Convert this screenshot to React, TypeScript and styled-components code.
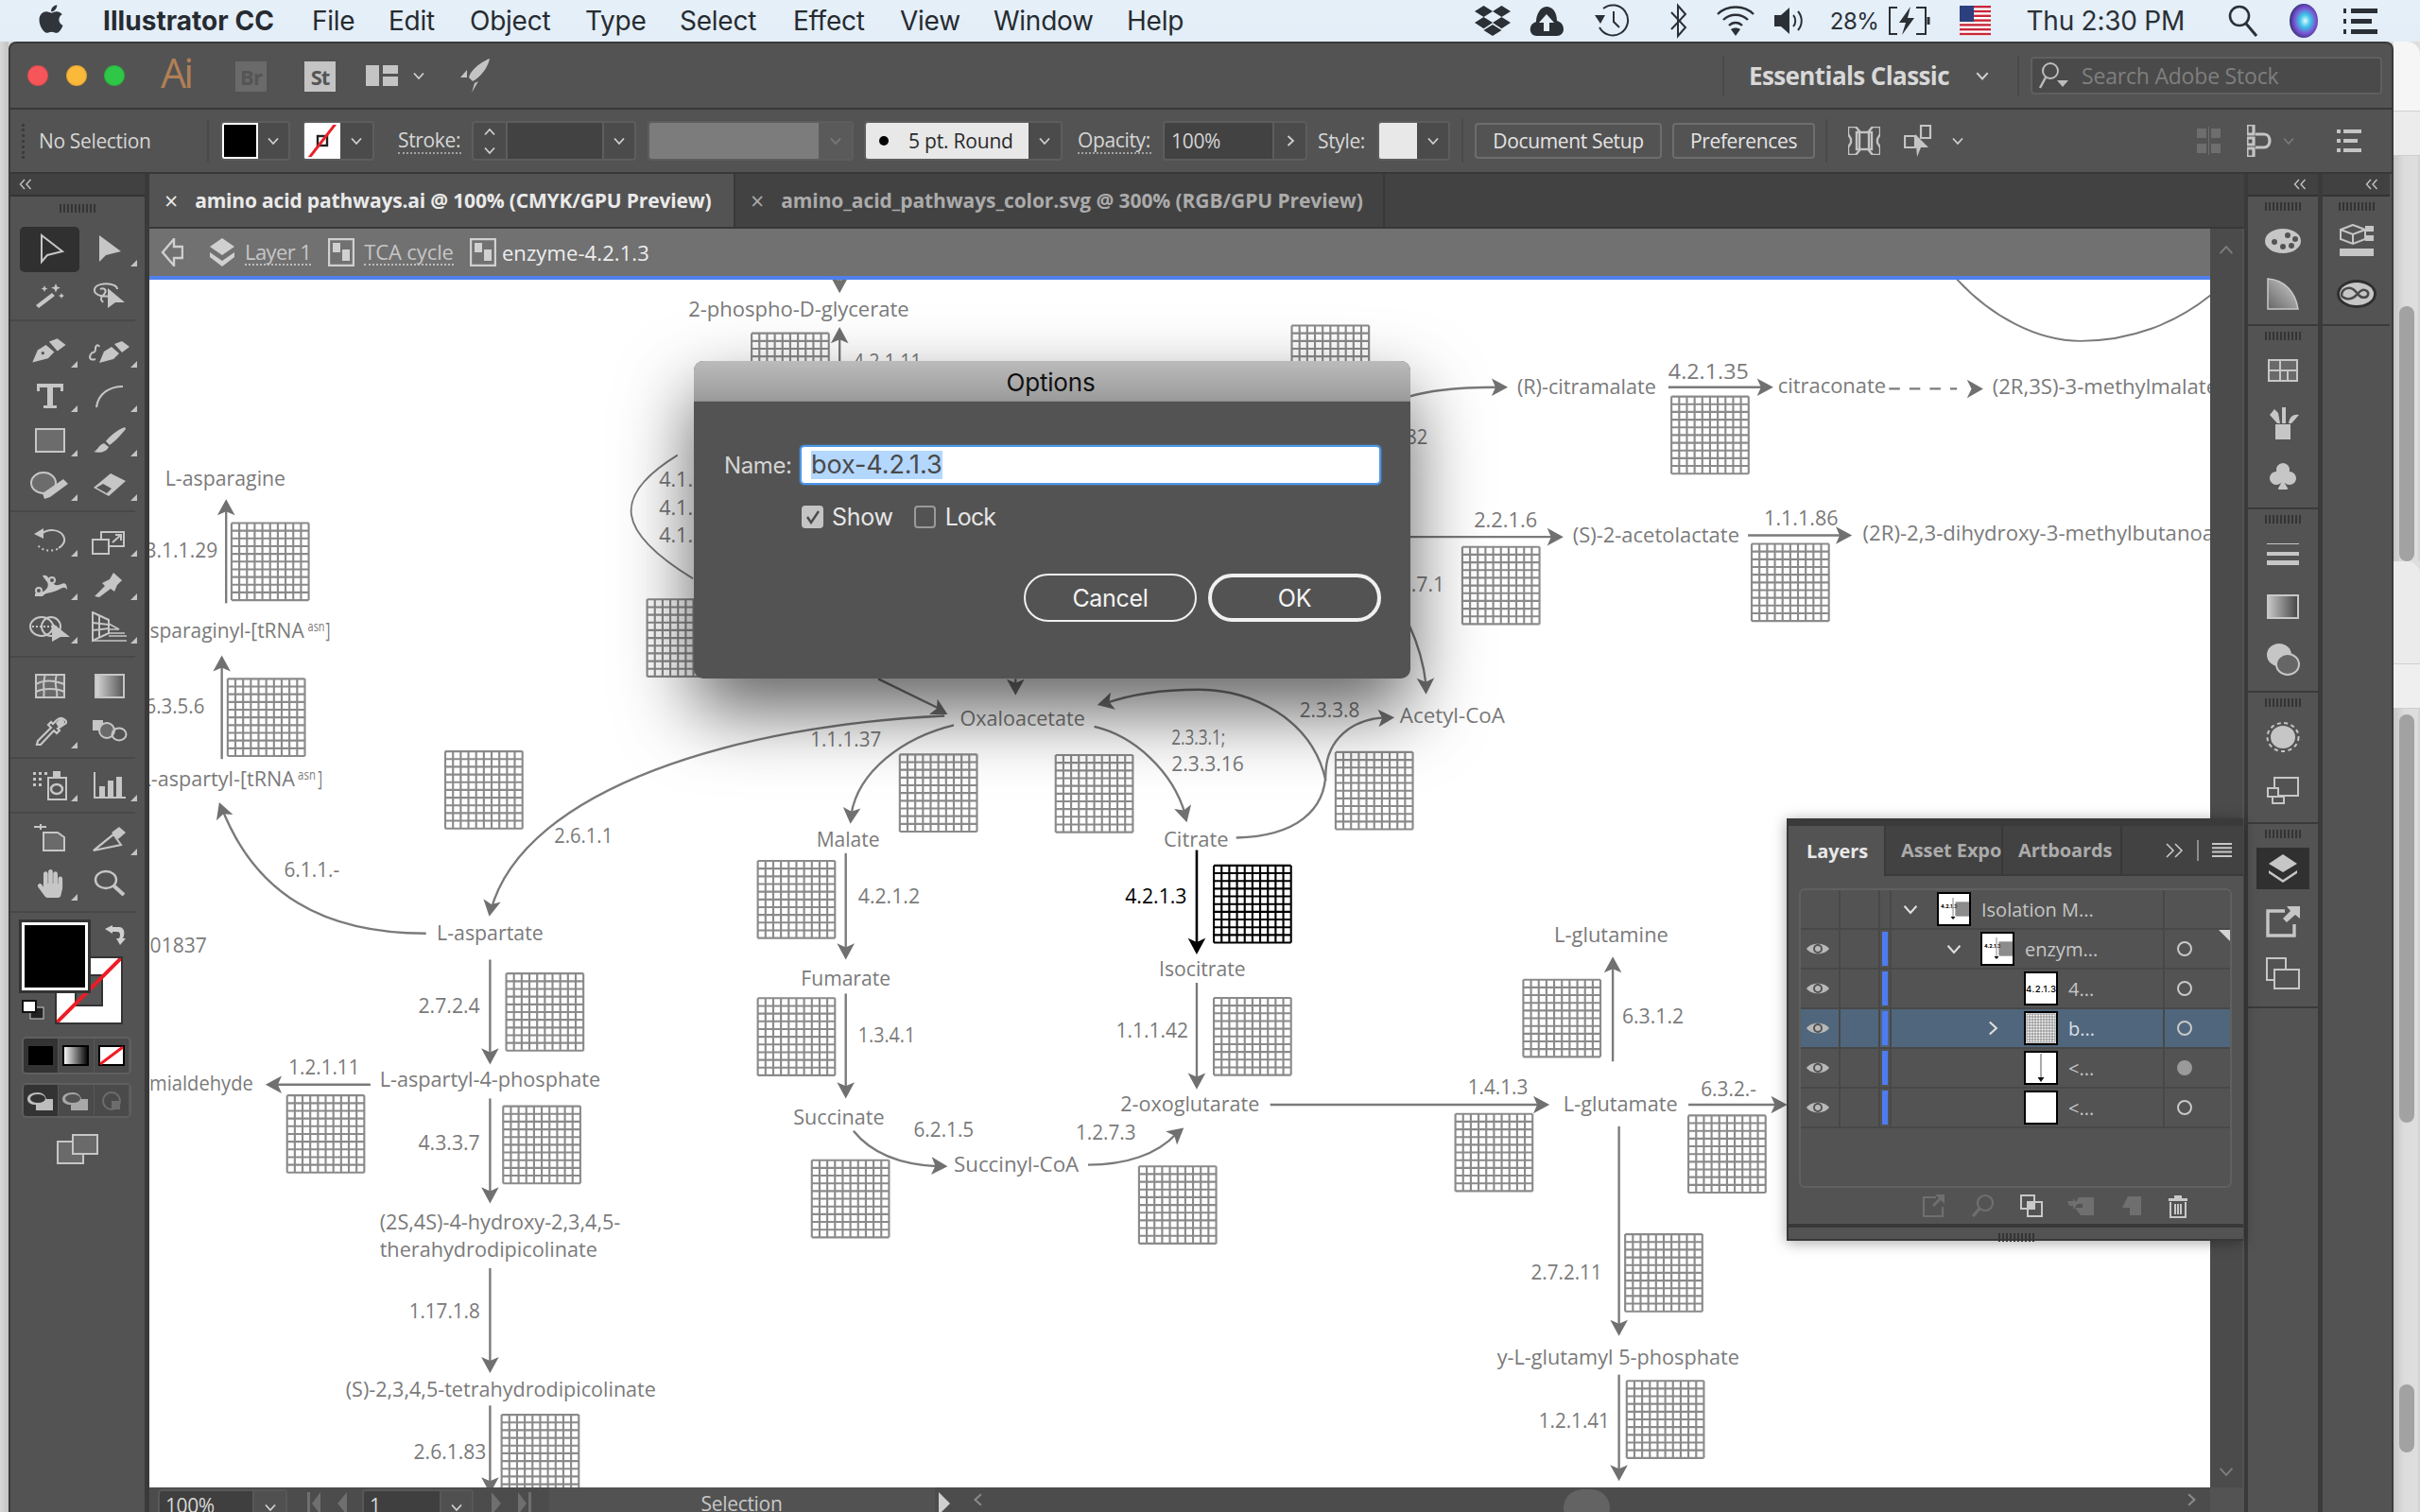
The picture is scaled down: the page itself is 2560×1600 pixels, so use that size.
import React from "react";
import styled, { createGlobalStyle } from "styled-components";
import { FaApple, FaDropbox, FaHandPaper } from "react-icons/fa";
import { BsSuitClubFill } from "react-icons/bs";

const Global = createGlobalStyle`
  html, body { margin: 0; padding: 0; width: 2560px; height: 1600px; overflow: hidden; background: #dcdcdc; }
  * { box-sizing: border-box; }
  body { font-family: "Open Sans", "Noto Sans", sans-serif; }
`;

const UI = `"Open Sans", "Noto Sans", sans-serif`;

const Root = styled.div`position: relative; width: 2560px; height: 1600px; overflow: hidden; display: flex; flex-direction: column;`;

/* ---------- mac menu bar ---------- */
const MenuBar = styled.div`
  height: 44px; flex: none; display: flex; align-items: center; background: linear-gradient(#e6f0f9, #e2edf7);
  color: #262b30; font-family: Inter, sans-serif; font-size: 28px; padding-left: 37px; position: relative;
`;
const AppleMark = styled.span`display: flex; color: #30353b; margin-right: 38px; margin-top: -4px;`;
const MenuItem = styled.span<{ $w: number; $b?: boolean }>`
  width: ${p => p.$w}px; flex: none; white-space: nowrap; font-weight: ${p => (p.$b ? 700 : 400)}; letter-spacing: ${p => (p.$b ? "0.05px" : "-0.25px")};
`;
const MenuRight = styled.div`
  margin-left: auto; display: flex; align-items: center; height: 44px; padding-right: 45px; color: #2b3036;
`;
const Tray = styled.span<{ $ml: number }>`display: flex; align-items: center; margin-left: ${p => p.$ml}px; white-space: nowrap;`;
const TrayPct = styled.span`font-size: 24px; letter-spacing: -0.4px;`;
const TrayClock = styled.span`font-size: 28px; letter-spacing: -0.25px;`;

/* ---------- desk ---------- */
const Desk = styled.div`flex: 1; display: flex; min-height: 0;`;
const LeftRail = styled.div`width: 9px; flex: none; background: linear-gradient(90deg, #d8d8d8, #c4c4c4);`;
const RightRail = styled.div`width: 28px; flex: none; display: flex; flex-direction: column; background: #dedede;`;
const RailTop = styled.div<{ $h: number; $c: string; $round?: boolean }>`
  height: ${p => p.$h}px; background: ${p => p.$c}; flex: none; border-top-right-radius: ${p => (p.$round ? 14 : 0)}px;
  border-bottom: 1px solid #cfcfcf;
`;
const RailTrack = styled.div<{ $h: number; $pt: number }>`
  height: ${p => p.$h}px; flex: none; padding: ${p => p.$pt}px 6px 0; background: linear-gradient(90deg, #c6c6c6, #dcdcdc 40%, #dedede 90%, #cfcfcf);
`;
const RailThumb = styled.div<{ $h: number }>`height: ${p => p.$h}px; border-radius: 8px; background: #a2a2a2;`;

/* ---------- window ---------- */
const Win = styled.div`
  width: 2523px; height: 1556px; flex: none; display: flex; flex-direction: column; background: #535353;
  border: 2px solid #3a3a3a; border-bottom: none; border-radius: 8px 8px 0 0; overflow: hidden; color: #c9c9c9; font-family: ${UI};
`;
const TitleBar = styled.div`height: 70px; flex: none; display: flex; align-items: center; border-bottom: 2px solid #383838; position: relative; padding-left: 18px; background: #535353;`;
const Light = styled.span<{ $c: string; $ml: number }>`
  width: 22px; height: 22px; border-radius: 50%; background: ${p => p.$c}; margin-left: ${p => p.$ml}px; flex: none; box-shadow: inset 0 0 0 1px rgba(0,0,0,.12);
`;
const AiMark = styled.span`font-family: "Open Sans", sans-serif; font-size: 43px; color: #b17f57; margin-left: 38px; width: 34px; line-height: 1; font-weight: 400; letter-spacing: -3px; margin-top: -8px; white-space: nowrap;`;
const AppBadge = styled.span<{ $on?: boolean; $ml: number }>`
  width: 33px; height: 32px; margin-left: ${p => p.$ml}px; display: flex; align-items: center; justify-content: center; flex: none; font-weight: 700; font-size: 22px; letter-spacing: -1px; margin-top: 2px;
  background: ${p => (p.$on ? "#c4c4c4" : "#6a6a6a")}; color: #555;
`;
const Spaced = styled.span<{ $ml: number }>`display: flex; align-items: center; margin-left: ${p => p.$ml}px; flex: none;`;
const VSep = styled.span<{ $ml: number; $h?: number }>`width: 2px; height: ${p => p.$h ?? 42}px; background: #494949; margin-left: ${p => p.$ml}px; flex: none;`;
const Workspace = styled.span`font-weight: 700; font-size: 26px; color: #d8d8d8; margin-left: 26px; width: 218px; white-space: nowrap; letter-spacing: -0.6px;`;
const StockField = styled.div`
  width: 372px; height: 40px; margin-left: 12px; border: 2px solid #5f5f5f; border-radius: 4px; background: #4a4a4a; display: flex; align-items: center; padding-left: 6px;
  color: #7f7f7f; font-size: 23px; flex: none; letter-spacing: -0.2px; gap: 10px;
`;

const ControlBar = styled.div`height: 68px; flex: none; display: flex; align-items: center; border-bottom: 2px solid #383838; background: #535353;`;
const GripV = styled.span`width: 3px; height: 37px; margin-left: 12px; border-left: 3px dotted #3c3c3c; flex: none;`;
const CtlText = styled.span<{ $ml: number; $w?: number; $dotted?: boolean; $c?: string }>`
  margin-left: ${p => p.$ml}px; font-size: 21px; white-space: nowrap; flex: none; width: ${p => (p.$w ? p.$w + "px" : "auto")}; letter-spacing: -0.35px;
  color: ${p => p.$c ?? "#d6d6d6"}; ${p => p.$dotted ? "border-bottom: 2px dotted #a2a2a2; line-height: 26px;" : ""}
`;
const Seg = styled.div<{ $ml: number; $w: number }>`
  margin-left: ${p => p.$ml}px; width: ${p => p.$w}px; height: 42px; flex: none; display: flex; border: 2px solid #5d5d5d; border-radius: 4px; background: #4b4b4b; overflow: hidden;
`;
const DD = styled.span<{ $dim?: boolean }>`
  flex: 1; display: flex; align-items: center; justify-content: center; color: ${p => (p.$dim ? "#7a7a7a" : "#cfcfcf")}; background: ${p => (p.$dim ? "#5a5a5a" : "transparent")};
`;
const Swatch = styled.span<{ $w: number; $c: string; $bd?: string }>`
  width: ${p => p.$w}px; flex: none; background: ${p => p.$c}; border: 2px solid ${p => p.$bd ?? "transparent"}; position: relative; display: flex; align-items: center; overflow: hidden;
`;
const BrushText = styled.span`font-size: 21px; color: #2a2a2a; letter-spacing: -0.2px; white-space: nowrap;`;
const BrushDot = styled.span`width: 10px; height: 10px; border-radius: 50%; background: #000; margin: 0 21px 0 12px;`;
const Stepper = styled.span`width: 36px; flex: none; display: flex; flex-direction: column; align-items: center; justify-content: space-around; border-right: 2px solid #5d5d5d; color: #cfcfcf;`;
const FieldCell = styled.span<{ $w: number }>`
  width: ${p => p.$w}px; flex: none; background: #424242; border-right: 2px solid #5d5d5d; font-size: 21px; color: #d4d4d4; padding-left: 7px; display: flex; align-items: center; letter-spacing: -0.3px;
`;
const CtlButton = styled.span<{ $ml: number; $w: number }>`
  margin-left: ${p => p.$ml}px; width: ${p => p.$w}px; height: 38px; flex: none; display: flex; align-items: center; justify-content: center;
  border: 2px solid #6d6d6d; border-radius: 4px; color: #e4e4e4; font-size: 21px; letter-spacing: -0.35px; white-space: nowrap;
`;

/* ---------- main ---------- */
const MainRow = styled.div`flex: 1; display: flex; min-height: 0;`;
const ToolCol = styled.div`width: 142px; flex: none; display: flex; flex-direction: column; background: #535353;`;
const CollapseHead = styled.div`
  height: 24px; flex: none; background: #414141; border-bottom: 2px solid #343434; display: flex; align-items: center; color: #bdbdbd; padding: 0 8px;
`;
const GripH = styled.div<{ $top: number }>`
  width: 38px; height: 9px; margin: ${p => p.$top}px auto 0; flex: none;
  background: repeating-linear-gradient(90deg, #343434 0 2px, transparent 2px 4px);
`;
const ToolGroup = styled.div<{ $pt: number; $pb: number; $row: number }>`
  display: grid; grid-template-columns: 63px 63px; grid-auto-rows: ${p => p.$row}px; padding: ${p => p.$pt}px 0 ${p => p.$pb}px 10px; margin: 0 10px 0 0;
  border-bottom: 2px solid #484848; flex: none;
`;
const Tool = styled.span<{ $on?: boolean; $corner?: boolean }>`
  position: relative; display: flex; align-items: center; justify-content: center; color: #c6c6c6; border-radius: 5px;
  ${p => (p.$on ? "background: #303030;" : "")}
  ${p => p.$corner ? `&::after { content: ""; position: absolute; right: 2px; bottom: 6px; border-style: solid; border-width: 0 0 7px 7px; border-color: transparent transparent #c4c4c4 transparent; }` : ""}
`;
const ColorArea = styled.div`position: relative; height: 124px; flex: none;`;
const BigFill = styled.div`position: absolute; left: 12px; top: 10px; width: 70px; height: 72px; background: #000; border: 3px solid #fff; outline: 3px solid #333;`;
const BigStroke = styled.div`position: absolute; left: 47px; top: 46px; width: 72px; height: 72px; background: #fff; border: 2px solid #333; overflow: hidden; display: flex;`;
const HoverIcon = styled.span<{ $l: number; $t: number }>`position: absolute; left: ${p => p.$l}px; top: ${p => p.$t}px; display: flex; color: #cfcfcf;`;
const ModeRow = styled.div<{ $mt: number; $h: number }>`
  margin: ${p => p.$mt}px 14px 0 12px; height: ${p => p.$h}px; flex: none; display: grid; grid-template-columns: repeat(3, 1fr); background: #4a4a4a; border: 2px solid #5f5f5f; border-radius: 5px; overflow: hidden;
`;
const ModeCell = styled.span<{ $on?: boolean; $dim?: boolean }>`display: flex; align-items: center; justify-content: center; background: ${p => (p.$on ? "#333" : "transparent")}; border-right: 1px solid #585858; color: ${p => (p.$dim ? "#6d6d6d" : "#c6c6c6")};`;
const ScreenBtn = styled.div`margin-top: 17px; display: flex; justify-content: center; color: #c6c6c6;`;
const Gutter = styled.div`width: 5px; flex: none; background: #3a3a3a;`;

const Center = styled.div`width: 2216px; flex: none; display: flex; flex-direction: column; min-height: 0;`;
const TabRow = styled.div`height: 58px; flex: none; display: flex; background: #424242; border-bottom: 2px solid #383838;`;
const DocTab = styled.div<{ $w: number; $on?: boolean }>`
  width: ${p => p.$w}px; flex: none; display: flex; align-items: center; padding-left: 16px; gap: 18px; border-right: 2px solid #383838; white-space: nowrap;
  background: ${p => (p.$on ? "#535353" : "#424242")}; color: ${p => (p.$on ? "#eaeaea" : "#ababab")}; font-size: 21px; font-weight: 700; letter-spacing: ${p => (p.$on ? "-0.17px" : "-0.09px")};
`;
const TabX = styled.span`font-weight: 400; font-size: 25px; line-height: 1;`;
const DocWrap = styled.div`flex: 1; display: flex; min-height: 0;`;
const DocCol = styled.div`width: 2180px; flex: none; display: flex; flex-direction: column; min-height: 0;`;
const Crumbs = styled.div`height: 50px; flex: none; background: #717171; display: flex; align-items: center; color: #cfcfcf; font-size: 22px;`;
const Crumb = styled.span<{ $ml: number; $on?: boolean; $ls: number }>`
  margin-left: ${p => p.$ml}px; letter-spacing: ${p => p.$ls}px; white-space: nowrap; color: ${p => (p.$on ? "#eeeeee" : "#c6c6c6")}; font-weight: ${p => (p.$on ? 500 : 400)};
  ${p => (p.$on ? "" : "border-bottom: 2px dotted #bdbdbd; line-height: 25px;")}
`;
const BlueLine = styled.div`height: 4px; flex: none; background: #4f80ec;`;
const CanvasBox = styled.div`flex: 1; background: #fff; min-height: 0; overflow: hidden; display: flex;`;
const Status = styled.div`height: 26px; flex: none; background: #4c4c4c; display: flex; align-items: flex-start; font-size: 21px; color: #cfcfcf; overflow: hidden;`;
const StField = styled.span<{ $ml: number; $w: number }>`
  margin-left: ${p => p.$ml}px; width: ${p => p.$w}px; height: 30px; margin-top: 2px; flex: none; display: flex; border: 2px solid #585858; border-radius: 4px; overflow: hidden; background: #3f3f3f;
`;
const StText = styled.span<{ $w: number }>`width: ${p => p.$w}px; flex: none; padding-left: 6px; line-height: 31px; white-space: nowrap; letter-spacing: -0.4px; color: #d8d8d8;`;
const StDD = styled.span`flex: 1; display: flex; justify-content: center; align-items: center; border-left: 2px solid #585858; background: #505050; padding-top: 8px; color: #d0d0d0;`;
const StIcon = styled.span<{ $ml: number; $end?: boolean }>`margin-left: ${p => (p.$end ? "auto" : p.$ml + "px")}; margin-right: ${p => (p.$end ? 12 : 0)}px; flex: none; display: flex; margin-top: 5px;`;
const StSel = styled.span`margin-left: 19px; width: 408px; height: 26px; flex: none; background: #525252; text-align: center; line-height: 34px; letter-spacing: -0.3px; color: #c8c8c8; padding-right: 1px;`;
const Knob = styled.span`margin-left: 611px; width: 49px; height: 40px; border-radius: 20px; background: #636363; flex: none; margin-top: 2px;`;

const VScroll = styled.div`width: 34px; flex: none; display: flex; flex-direction: column; background: #4b4b4b;`;
const VTrack = styled.div`flex: 1; display: flex; flex-direction: column; align-items: center; justify-content: space-between; padding: 14px 0 8px; color: #7f7f7f;`;
const VCorner = styled.div`height: 26px; flex: none; background: #535353;`;

const Dock = styled.div`width: 154px; flex: none; display: flex; border-left: 4px solid #3a3a3a;`;
const DockCol = styled.div<{ $w: number }>`width: ${p => p.$w}px; flex: none; display: flex; flex-direction: column; background: #535353;`;
const DockHead = styled.div`height: 24px; flex: none; background: #414141; border-bottom: 2px solid #343434; display: flex; align-items: center; justify-content: flex-end; color: #bdbdbd; padding: 0 11px;`;
const DockGroup = styled.div<{ $pb: number }>`
  flex: none; display: flex; flex-direction: column; align-items: center; padding-bottom: ${p => p.$pb}px; border-bottom: 2px solid #3a3a3a;
`;
const DockGrip = styled.div`width: 38px; height: 9px; margin: 6px 0 4px; background: repeating-linear-gradient(90deg, #343434 0 2px, transparent 2px 4px); flex: none;`;
const DockBtn = styled.span<{ $on?: boolean; $h?: number }>`
  width: 56px; height: ${p => p.$h ?? 56}px; display: flex; align-items: center; justify-content: center; color: #c6c6c6; border-radius: 5px; flex: none;
  ${p => (p.$on ? "background: linear-gradient(#303030,#303030) center/56px 44px no-repeat;" : "")}
`;
const DockGap = styled.div`width: 5px; flex: none; background: #3a3a3a;`;

/* ---------- layers panel ---------- */
const LayersPanel = styled.div`
  position: absolute; left: 1890px; top: 866px; width: 483px; height: 447px; background: #535353; border: 2px solid #383838; border-top: 8px solid #3a3a3a; display: flex; flex-direction: column;
  box-shadow: 0 2px 14px rgba(0,0,0,.35); font-family: ${UI}; z-index: 2; border-right: 0;
`;
const PTabs = styled.div`height: 53px; flex: none; display: flex; background: #424242; align-items: stretch; border-bottom: 2px solid #3a3a3a; position: relative;`;
const PTab = styled.span<{ $w: number; $on?: boolean }>`
  width: ${p => p.$w}px; flex: none; display: flex; align-items: center; overflow: hidden; white-space: nowrap; padding-left: ${p => (p.$on ? 19 : 16)}px; font-size: 20px; font-weight: 700; letter-spacing: -0.1px;
  background: ${p => (p.$on ? "#535353" : "#424242")}; color: ${p => (p.$on ? "#e8e8e8" : "#ababab")}; border-right: 2px solid #383838;
  ${p => (p.$on ? "margin-bottom: -2px; border-right-color: #3a3a3a;" : "")}
`;
const PTabTools = styled.span`margin-left: auto; display: flex; align-items: center; gap: 14px; padding-right: 12px; color: #c8c8c8;`;
const PTabDiv = styled.span`width: 2px; height: 22px; background: #8d8d8d;`;
const PFrame = styled.div`
  margin: 13px 12px 0 11px; height: 317px; border: 2px solid #606060; border-radius: 6px; flex: none; overflow: hidden; position: relative;
`;
const LRow = styled.div<{ $sel?: boolean }>`
  height: 42px; display: grid; grid-template-columns: 42px 42px 12px 289px 1fr; border-bottom: 2px solid #484848;
  background: ${p => (p.$sel ? "#50667c" : "transparent")}; color: ${p => (p.$sel ? "#d8dfe6" : "#c6c6c6")};
`;
const LCell = styled.span<{ $bar?: boolean; $line?: boolean; $eye?: boolean }>`
  display: flex; align-items: center; justify-content: center; position: relative; padding-right: ${p => (p.$eye ? 5 : 0)}px;
  ${p => (p.$line === false ? "" : "border-right: 2px solid #484848;")}
  ${p => p.$bar ? `&::before { content: ""; position: absolute; left: 2px; top: 2px; bottom: 2px; width: 6px; background: #4e7cf0; }` : ""}
`;
const LMain = styled.span<{ $level: number }>`
  display: flex; align-items: center; border-right: 2px solid #484848; padding-left: ${p => 48 + 46 * p.$level}px; position: relative; font-size: 20px; font-weight: 500; white-space: nowrap;
`;
const LChevron = styled.span<{ $in: boolean }>`position: absolute; display: flex; transform: translateX(${p => (p.$in ? -42 : -37)}px);`;
const Thumb = styled.span`width: 36px; height: 36px; background: #fff; border: 2px solid #000; flex: none; margin-right: 11px; display: flex; overflow: hidden;`;
const TargetRing = styled.span<{ $full?: boolean }>`
  width: 16px; height: 16px; border-radius: 50%; border: 2px solid #c8c8c8; margin-left: -28px; ${p => (p.$full ? "background: #9a9a9a; border-color:#9a9a9a;" : "")}
`;
const CornerFlag = styled.span`position: absolute; right: 0; top: 42px; border-style: solid; border-width: 0 12px 12px 0; border-color: transparent #d4d4d4 transparent transparent;`;
const PFoot = styled.div`height: 38px; flex: none; display: flex; align-items: center; padding-left: 141px; color: #6f6f6f; gap: 26px;`;
const PFootOn = styled.span`color: #c8c8c8; display: flex;`;
const PStrip = styled.div`flex: 1; border-top: 4px solid #383838; display: flex; justify-content: center; align-items: center;`;

/* ---------- dialog ---------- */
const Dialog = styled.div`
  position: absolute; left: 734px; top: 382px; width: 758px; height: 336px; border-radius: 10px; background: #535353; z-index: 3;
  box-shadow: 0 34px 78px rgba(0,0,0,.62); display: flex; flex-direction: column; font-family: ${UI}; overflow: hidden;
`;
const DlgTitle = styled.div`
  height: 43px; flex: none; background: linear-gradient(#bcbbbc, #9b9b9b); text-align: center; color: #111; font-family: Inter, sans-serif; font-size: 26px; line-height: 45px; letter-spacing: -0.2px; border-bottom: 1px solid #8c8c8c; padding-right: 3px;
`;
const DlgBody = styled.div`flex: 1; padding: 46px 31px 0 32px; display: flex; flex-direction: column; font-family: Inter, sans-serif;`;
const NameRow = styled.div`display: flex; align-items: center; gap: 8px;`;
const NameLabel = styled.label`font-size: 24px; color: #d4d4d4; width: 72px; letter-spacing: -0.4px;`;
const NameField = styled.div`
  width: 615px; height: 42px; background: #fff; border: 2px solid #4e97e8; border-radius: 5px; box-shadow: 0 0 2px #4e97e8; padding-left: 10px; display: flex; align-items: center; color: #4a4a4a; font-size: 27px; letter-spacing: -0.1px;
`;
const SelText = styled.span`background: #b4d7fe; line-height: 30px;`;
const ChkRow = styled.div`display: flex; align-items: center; margin: 19px 0 0 82px; font-size: 25px; color: #e6e6e6;`;
const Chk = styled.span<{ $on?: boolean; $ml: number }>`
  width: 23px; height: 24px; border-radius: 4px; margin-left: ${p => p.$ml}px; flex: none; display: flex; align-items: center; justify-content: center; color: #4a4a4a;
  ${p => (p.$on ? "background: #c4c4c4;" : "border: 2px solid #9a9a9a;")}
`;
const ChkText = styled.span<{ $ml: number; $ls: number }>`margin-left: ${p => p.$ml}px; letter-spacing: ${p => p.$ls}px;`;
const BtnRow = styled.div`display: flex; justify-content: flex-end; gap: 12px; margin-top: 45px;`;
const DlgBtn = styled.span<{ $def?: boolean }>`
  width: 183px; height: 51px; border-radius: 26px; border: ${p => (p.$def ? "4px" : "2px")} solid #f0f0f0; display: flex; align-items: center; justify-content: center; color: #f4f4f4; font-size: 25px; letter-spacing: -0.3px;
`;

/* ---------- icon helpers ---------- */
const Svg: React.FC<{ w: number; h: number; vb?: string; children: React.ReactNode }> = ({ w, h, vb, children }) => (
  <svg width={w} height={h} viewBox={vb ?? `0 0 ${w} ${h}`} fill="currentColor" style={{ display: "block", flex: "none" }}>{children}</svg>
);
const Chevron: React.FC<{ d?: "d" | "u" | "r" | "l"; s?: number; c?: string; sw?: number }> = ({ d = "d", s = 14, c = "currentColor", sw = 1.8 }) => {
  const r = { d: 0, u: 180, r: -90, l: 90 }[d];
  return <svg width={s} height={s} viewBox="0 0 14 14" style={{ transform: `rotate(${r}deg)`, display: "block", flex: "none" }}><path d="M2 4.5 L7 10 L12 4.5" fill="none" stroke={c} strokeWidth={sw} /></svg>;
};
const Dbl = () => <svg width="16" height="14" viewBox="0 0 16 14"><path d="M7 2 L2.5 7 L7 12 M13.5 2 L9 7 L13.5 12" fill="none" stroke="#c2c2c2" strokeWidth="1.4" /></svg>;
const ln = { fill: "none", stroke: "currentColor", strokeWidth: 2 } as const;

const SelTool = () => <Svg w={40} h={34}><path {...ln} d="M11 2 L11 30 L17 23 L33 19 Z" /></Svg>;
const DirTool = () => <Svg w={40} h={34}><path d="M9 2 L9 30 L16 23 L32 19 Z" /></Svg>;
const Wand = () => <Svg w={40} h={30}><path d="M5 26 L22 13 L25 16 L8 29 Z M26 3 l1.5 3.5 3.5 1 -3.5 1.5 -1.5 3.5 -1.5 -3.5 -3.5 -1.5 3.5 -1 Z M14 5 l1 2.5 2.5 1 -2.5 1 -1 2.5 -1 -2.5 -2.5 -1 2.5 -1 Z M32 13 l1 2 2 1 -2 1 -1 2 -1 -2 -2 -1 2 -1 Z" /></Svg>;
const LassoT = () => <Svg w={40} h={32}><path {...ln} d="M21 17 C10 19 3 15 4 10 C5 5 15 3 22 5 C26 6 28 8 28 10 M10 10 C14 8 17 11 15 14 C13 18 10 17 11 21 L13 24" /><path d="M18 30 L18 9 L36 24 L26 24 Z" /></Svg>;
const Pen = () => <Svg w={44} h={29} vb="0 0 40 26"><path d="M3 24 L8 12 L16 7 L24 14 L18 20 Z M19 4 L27 1 L35 7 L27 13 Z" /><circle cx="13" cy="15" r="1.5" fill="#535353" /></Svg>;
const Curv = () => <Svg w={46} h={28}><path {...ln} d="M8 22 C2 24 1 20 3 17 C5 13 8 17 8 11 C8 7 11 6 12 9" /><path d="M12 26 L17 14 L25 9 L33 16 L27 22 Z M28 6 L36 3 L44 9 L36 15 Z" /></Svg>;
const TypeT = () => <Svg w={34} h={30}><path d="M3 2 H31 V10 H28 V6 H20 V25 H24 V28 H10 V25 H14 V6 H6 V10 H3 Z" /></Svg>;
const Arc = () => <Svg w={32} h={26}><path {...ln} d="M2 25 C4 10 16 3 30 3" /></Svg>;
const Rect = () => <Svg w={34} h={28}><rect x="2" y="2" width="30" height="24" fill="#6c6c6c" stroke="currentColor" strokeWidth="2" /></Svg>;
const Brush = () => <Svg w={36} h={30}><path d="M34 1 C28 3 18 10 14 16 L18 20 C25 15 31 8 35 3 Z M12 18 L17 22 C15 27 7 29 1 27 C5 26 6 20 12 18 Z" /></Svg>;
const Shaper = () => <Svg w={44} h={30}><ellipse cx="15" cy="13" rx="13" ry="11" fill="#6c6c6c" stroke="currentColor" strokeWidth="2" /><path d="M14 24 L16 30 L22 28 L41 14 L36 9 Z" /></Svg>;
const Eraser = () => <Svg w={36} h={28}><path d="M1 17 L19 2 L35 10 L17 26 Z" fill="currentColor" /><path d="M4 17 L11 13 L20 18 L15 23 Z" fill="#535353" /></Svg>;
const Rotate = () => <Svg w={36} h={30}><path d="M9 8 C16 2 28 3 32 10 C35 16 32 20 27 23" fill="none" stroke="currentColor" strokeWidth="2" /><path d="M26 24 C18 27 10 26 5 20" fill="none" stroke="currentColor" strokeWidth="2" strokeDasharray="2 3" /><path d="M1 8 L11 2 L11 13 Z" /></Svg>;
const Scale = () => <Svg w={38} h={32}><path {...ln} d="M1 15 H18 V30 H1 Z M10 15 V7 H34 V22 H18" /><path {...ln} d="M22 18 L31 10 M25 10 H31 V16" /></Svg>;
const Warp = () => <Svg w={40} h={28}><path d="M4 24 C10 24 14 22 17 18 C20 12 14 10 12 5 C16 4 18 6 20 10 C24 16 28 16 32 14 C36 12 38 15 38 20 C35 16 33 18 29 20 C22 24 16 22 12 27 L4 27 Z" /><circle cx="8" cy="21" r="3" fill="#535353" stroke="currentColor" strokeWidth="2" /><circle cx="22" cy="10" r="3" fill="#535353" stroke="currentColor" strokeWidth="2" /></Svg>;
const PinT = () => <Svg w={34} h={28}><path d="M1 27 L12 16 L9 13 L17 9 L21 2 L30 10 L25 15 L22 22 L18 19 L6 28 Z" /></Svg>;
const Builder = () => <Svg w={46} h={30}><ellipse cx="14" cy="14" rx="12" ry="10" fill="none" stroke="currentColor" strokeWidth="2" /><ellipse cx="24" cy="14" rx="10" ry="10" fill="none" stroke="currentColor" strokeWidth="2" /><path d="M4 14 H30" stroke="currentColor" strokeDasharray="2 2" strokeWidth="2" /><path d="M25 30 L25 10 L44 25 L34 25 Z" /></Svg>;
const Persp = () => <Svg w={40} h={34}><path d="M2 1 L19 9 L19 23 L2 31 Z" fill="none" stroke="currentColor" strokeWidth="2" /><path d="M2 12 L19 14 M2 20 L19 18 M9 4 V28" stroke="currentColor" strokeWidth="2" /><path d="M19 13 L30 19 H19 M19 23 H36 M19 26 H38 M2 31 H38" stroke="currentColor" strokeWidth="1.6" fill="none" /></Svg>;
const Mesh = () => <Svg w={34} h={28}><rect x="2" y="2" width="30" height="24" fill="#6a6a6a" stroke="currentColor" strokeWidth="2" /><path {...ln} d="M2 12 C12 6 22 8 32 12 M2 20 C10 16 24 16 32 20 M12 2 C8 12 12 20 10 26 M24 2 C20 12 26 20 24 26" /></Svg>;
const Grad = () => <svg width="34" height="28" viewBox="0 0 34 28"><defs><linearGradient id="tg" x1="0" x2="1"><stop offset="0" stopColor="#d8d8d8" /><stop offset="1" stopColor="#555" /></linearGradient></defs><rect x="2" y="2" width="30" height="24" fill="url(#tg)" stroke="#c6c6c6" strokeWidth="2" /></svg>;
const Dropper = () => <Svg w={36} h={32}><path d="M34 4 C31 1 28 1 25 4 L21 8 L19 6 L16 9 L19 12 L5 26 L4 30 L8 30 L22 15 L25 18 L28 15 L26 13 L32 9 C35 8 36 6 34 4 Z" fill="none" stroke="currentColor" strokeWidth="2.2" /><path d="M24 7 L28 3 C31 1 35 5 32 9 L27 12 Z" /></Svg>;
const Blend = () => <Svg w={38} h={28}><rect x="1" y="2" width="11" height="11" /><circle cx="16" cy="13" r="8" fill="#6a6a6a" stroke="currentColor" strokeWidth="2" /><ellipse cx="29" cy="17" rx="7.5" ry="6.5" fill="none" stroke="currentColor" strokeWidth="2" /></Svg>;
const Sprayer = () => <Svg w={38} h={34}><path d="M1 3 h3 v3 h-3 Z M7 3 h3 v3 h-3 Z M13 3 h3 v3 h-3 Z M1 9 h3 v3 h-3 Z M7 9 h3 v3 h-3 Z M1 15 h3 v3 h-3 Z M7 15 h3 v3 h-3 Z" /><path {...ln} d="M17 9 H36 V32 H17 Z" /><path d="M22 2 H30 V8 H22 Z" /><ellipse cx="26" cy="21" rx="6" ry="5" fill="none" stroke="currentColor" strokeWidth="2.5" /></Svg>;
const Graph = () => <Svg w={38} h={30}><path d="M2 1 H4 V27 H36 V29 H2 Z M8 16 H14 V27 H8 Z M17 10 H23 V27 H17 Z M26 6 H32 V27 H26 Z" /></Svg>;
const Artboard = () => <Svg w={36} h={30}><path d="M1 3 H14 M8 0 V6" stroke="currentColor" strokeWidth="2" /><path d="M11 9 H26 L33 14 V28 H11 Z" fill="#6a6a6a" stroke="currentColor" strokeWidth="2" /></Svg>;
const Knife = () => <Svg w={36} h={30}><path {...ln} d="M1 28 L22 11" /><path d="M1 28 L30 22 L22 11 Z" fill="none" stroke="currentColor" strokeWidth="2" /><path d="M20 9 L28 3 L35 9 L27 16 Z" /></Svg>;
const Zoom = () => <Svg w={34} h={30}><ellipse cx="13" cy="11" rx="11" ry="9" fill="none" stroke="currentColor" strokeWidth="2.4" /><path d="M21 17 L32 27" stroke="currentColor" strokeWidth="4" /></Svg>;

/* ---------- canvas ---------- */
const GREY = "#7a7a7a";
type T = [string, number, number, number, string?];
const labels: T[] = [
  ["2-phospho-D-glycerate", 446, 589, 200.4], ["4.2.1.11", 553, 597, 234], ["(R)-citramalate", 983, 1073, 251], ["4.2.1.35", 1081, 1133, 241],
  ["citraconate", 1152, 1222, 250], ["(2R,3S)-3-methylmalate", 1291, 1437, 251], ["2.2.1.6", 955, 996, 337], ["(S)-2-acetolactate", 1019, 1127, 347],
  ["1.1.1.86", 1143, 1191, 336], ["(2R)-2,3-dihydroxy-3-methylbutanoate", 1207, 1447, 346], ["L-asparagine", 107, 185, 310], ["3.1.1.29", 94, 141, 357],
  ["L-asparaginyl-[tRNA", 79, 197, 409], ["]", 211, 214, 409], ["6.3.5.6", 94, 132.5, 458], ["L-aspartyl-[tRNA", 91, 191, 505], ["]", 206, 209, 505],
  ["C01837", 89, 134, 613], ["6.1.1.-", 184, 220, 564], ["2.6.1.1", 359, 397, 542], ["L-aspartate", 283, 352, 605], ["1.1.1.37", 525, 571, 479],
  ["Oxaloacetate", 622, 703, 466], ["2.3.3.1;", 759, 794, 478], ["2.3.3.16", 759, 806, 495], ["2.3.3.8", 842, 881, 460], ["Acetyl-CoA", 907, 975, 464],
  ["Malate", 529, 570, 544], ["Citrate", 754, 796, 544], ["4.2.1.3", 729, 769, 581, "#000"], ["4.2.1.2", 556, 596, 581], ["Fumarate", 519, 577, 634],
  ["Isocitrate", 751, 807, 628], ["1.3.4.1", 556, 593, 671], ["1.1.1.42", 723, 770, 668], ["Succinate", 514, 573, 724], ["2-oxoglutarate", 726, 816, 716],
  ["6.2.1.5", 592, 631, 732], ["1.2.7.3", 697, 736, 734], ["Succinyl-CoA", 618, 699, 755], ["L-aspartyl-4-phosphate", 246, 389, 700], ["2.7.2.4", 271, 311, 652],
  ["1.2.1.11", 187, 233, 692], ["semialdehyde", 84, 164, 702], ["4.3.3.7", 271, 311, 741], ["(2S,4S)-4-hydroxy-2,3,4,5-", 246, 402, 792],
  ["therahydrodipicolinate", 246, 387, 810], ["1.17.1.8", 265, 311, 850], ["(S)-2,3,4,5-tetrahydrodipicolinate", 224, 425, 901], ["2.6.1.83", 268, 315, 941],
  ["L-glutamine", 1007, 1081, 606], ["6.3.1.2", 1051, 1091, 659], ["1.4.1.3", 951, 990, 705], ["L-glutamate", 1013, 1087, 716], ["6.3.2.-", 1102, 1138, 706],
  ["2.7.2.11", 992, 1038, 825], ["y-L-glutamyl 5-phosphate", 970, 1127, 880], ["1.2.1.41", 997, 1043, 921],
  ["4.1.", 427, 449, 311], ["4.1.", 427, 449, 329], ["4.1.", 427, 449, 347], ["4.2.1.82", 880, 925, 283], ["2.2.7.1", 896, 936, 379],
];
const grids: [number, number, string?][] = [
  [487, 216], [837, 211], [1083, 257], [947.5, 354.5], [1135, 352.5], [150, 339], [147.5, 440], [419.3, 388.5], [288.5, 487], [583, 489], [684, 489.4], [865.4, 487.5],
  [786.5, 561, "#000"], [786.5, 646.8], [491, 558], [491, 647], [526, 752], [738, 756], [328, 631], [326, 717], [186, 710], [325, 917], [987, 635], [943, 722], [1094, 723], [1053, 800], [1054, 895],
];
const CELL = 5;
const gridPath = (x: number, y: number) => {
  let d = "";
  for (let i = 0; i <= 10; i++) d += `M${x + i * CELL} ${y}V${y + 50}M${x} ${y + i * CELL}H${x + 50}`;
  return d;
};
type Arw = [string, number, number, number, string?]; // path, tipx, tipy, angle(deg), color
const arrows: Arw[] = [
  ["M146.5 391V330", 146.5, 323.5, -90], ["M143.7 492V431", 143.7, 424.7, -90], ["M276 605C210 605 165 580 143 522", 142, 520, -110],
  ["M612 464C480 470 340 510 318 590", 317, 594, 100], ["M569 440L610 460", 614, 463, 28], ["M658 440V446", 658, 450.7, 90],
  ["M618 470C585 478 556 500 551.5 528", 551, 534, 95], ["M709 471C735 477 760 500 768 528", 769, 533, 75],
  ["M859 506C850 465 810 447 776 447C750 447 730 451 716 456", 711, 457, 165], ["M801 543C840 542 859 525 859 500C860 480 875 466 898 465", 903.5, 465, -3],
  ["M775.4 551V612", 775.4, 618.6, 90, "#000"], ["M775.4 637V700", 775.4, 706, 90], ["M548 553V616", 548, 622, 90], ["M548 644V706", 548, 712, 90],
  ["M553 733C565 748 585 755 608 756", 614, 756, 2], ["M705 755C730 755 750 748 762 735", 767, 731, -40], ["M823 716H998", 1004, 716, 0],
  ["M317.5 622V684", 317.5, 690, 90], ["M317.5 712V774", 317.5, 780, 90], ["M317.5 822V884", 317.5, 890, 90], ["M317.5 911V964", 317.5, 968, 90],
  ["M240 703H178", 172, 703, 180], ["M1045 688V626", 1045, 620, -90], ["M1049 730V860", 1049, 866, 90], ["M1049 891V954", 1049, 960, 90], ["M1094 716H1152", 1158, 716, 0],
  ["M913 257C930 252 950 251 970 251", 977, 251, 0], ["M1081 251H1143", 1149, 251, 0], ["M900 348H1007", 1013, 348, 0], ["M1132.6 347H1194", 1200, 347, 0],
  ["M913 405C920 420 923 435 924 444", 924, 450, 88], ["M544 170V184", 544, 190, 90], ["M544 260V218", 544, 212, -90],
];
const Diagram = () => (
  <svg width="2180" height="1278" viewBox="96.8 181.3 1335.2 782.8" style={{ display: "block" }}>
    {grids.map(([x, y, c], i) => <path key={i} d={gridPath(x, y)} fill="none" stroke={c ?? "#8a8a8a"} strokeWidth="1.3" />)}
    <g fill="none" stroke={GREY} strokeWidth="1.15">
      <path d="M1268 181C1290 205 1320 221 1348 221C1380 221 1410 210 1434 190" />
      <path d="M439 295C395 322 400 345 449 375" />
    </g>
    {arrows.map(([d, x, y, a, c], i) => (
      <g key={i}>
        <path d={d} fill="none" stroke={c ?? GREY} strokeWidth={c ? 1.6 : 1.45} />
        <path d="M0 0L-10.5 -5.7L-8 0L-10.5 5.7Z" fill={c ?? "#707070"} transform={`translate(${x} ${y}) rotate(${a})`} />
      </g>
    ))}
    <path d="M1224 252H1268" fill="none" stroke={GREY} strokeWidth="1.45" strokeDasharray="7 6.2" />
    <path d="M0 0L-10.5 -6L-7.6 0L-10.5 6Z" fill="#707070" transform="translate(1285 252)" />
    <g fontFamily={`"Open Sans", sans-serif`} fontSize="13.4" fill={GREY}>
      {labels.map(([t, a, b, y, c], i) => (
        <text key={i} x={a} y={y + 4.6} textLength={b - a} lengthAdjust="spacingAndGlyphs" fill={c}>{t}</text>
      ))}
      <text x="199.4" y="409.2" fontSize="8.4" textLength="11" lengthAdjust="spacingAndGlyphs">asn</text>
      <text x="193" y="505.2" fontSize="8.4" textLength="11.5" lengthAdjust="spacingAndGlyphs">asn</text>
    </g>
  </svg>
);

const MiniGrid = () => (
  <svg width="32" height="32" viewBox="0 0 32 32"><path d={Array.from({ length: 11 }, (_, i) => `M${1 + i * 3} 1V31M1 ${1 + i * 3}H31`).join("")} stroke="#777" strokeWidth=".8" fill="none" /></svg>
);
const MiniAll = () => (
  <svg width="32" height="32" viewBox="0 0 32 32">
    <text x="2" y="15" fontSize="5.4" fontWeight="700" fontFamily="Inter, sans-serif" fill="#000">4.2.1.3</text>
    <path d="M15 4V25" stroke="#888" strokeWidth="1" /><path d="M12.5 24H17.5L15 27Z" fill="#000" />
    <path d={Array.from({ length: 8 }, (_, i) => `M${18 + i * 2} 9V23M18 ${9 + i * 2}H32`).join("")} stroke="#666" strokeWidth="1" fill="none" />
  </svg>
);
const MiniText = () => <svg width="32" height="32" viewBox="0 0 32 32"><text x="0" y="20" fontSize="9.6" textLength="32" fontFamily="Inter, sans-serif" fill="#000">4.2.1.3</text></svg>;
const MiniArrow = () => <svg width="32" height="32" viewBox="0 0 32 32"><path d="M16 1V26" stroke="#aaa" strokeWidth="2" /><path d="M12.5 26H19.5L16 31Z" fill="#111" /></svg>;
const Eye = () => <Svg w={26} h={16}><path d="M1 8C6 1 20 1 25 8C20 15 6 15 1 8Z" fill="#b8b8b8" /><circle cx="13" cy="8" r="5" fill="#535353" /><circle cx="13" cy="8" r="3" fill="#b8b8b8" /></Svg>;

const rows: { sel?: boolean; eye: boolean; level: number; chev?: "d" | "r"; thumb: React.ReactNode; name: string; full?: boolean; ring: boolean }[] = [
  { eye: false, level: 0, chev: "d", thumb: <MiniAll />, name: "Isolation M...", ring: false },
  { eye: true, level: 1, chev: "d", thumb: <MiniAll />, name: "enzym...", ring: true },
  { eye: true, level: 2, thumb: <MiniText />, name: "4...", ring: true },
  { eye: true, sel: true, level: 2, chev: "r", thumb: <MiniGrid />, name: "b...", ring: true },
  { eye: true, level: 2, thumb: <MiniArrow />, name: "<...", full: true, ring: true },
  { eye: true, level: 2, thumb: null, name: "<...", ring: true },
];

export default function App() {
  return (
    <Root>
      <Global />
      <MenuBar>
        <AppleMark><FaApple size={34} /></AppleMark>
        <MenuItem $b $w={221}>Illustrator CC</MenuItem>
        <MenuItem $w={81}>File</MenuItem>
        <MenuItem $w={86}>Edit</MenuItem>
        <MenuItem $w={122}>Object</MenuItem>
        <MenuItem $w={100}>Type</MenuItem>
        <MenuItem $w={120}>Select</MenuItem>
        <MenuItem $w={113}>Effect</MenuItem>
        <MenuItem $w={99}>View</MenuItem>
        <MenuItem $w={141}>Window</MenuItem>
        <MenuItem $w={60}>Help</MenuItem>
        <MenuRight>
          <Tray $ml={0}><FaDropbox size={38} /></Tray>
          <Tray $ml={20}><Svg w={36} h={34}><path d="M8 33C2 33 0 28 1 24C2 20 5 19 7 18C7 10 12 1 19 2C26 3 29 10 29 17C33 18 36 21 36 26C36 30 33 33 29 33Z" /><path d="M18 10L26 19H21V28H15V19H10Z" fill="#e4eef8" /></Svg></Tray>
          <Tray $ml={32}><Svg w={38} h={38}><path d="M10 6A16 16 0 1 1 6 26" {...ln} /><path d="M1 13L12 13L7 22Z" /><path d="M21 9V20L27 26" {...ln} /></Svg></Tray>
          <Tray $ml={41}><Svg w={22} h={38}><path d="M3 10L18 26L10 35V3L18 12L3 28" fill="none" stroke="currentColor" strokeWidth="2" /></Svg></Tray>
          <Tray $ml={28}><Svg w={42} h={36}><path {...ln} strokeWidth={2.4} d="M2 11C12 1 30 1 40 11M8 17C15 10 27 10 34 17M14 23C18 19 24 19 28 23" /><path d="M21 34L16 27C19 25 23 25 26 27Z" /></Svg></Tray>
          <Tray $ml={19}><Svg w={34} h={34}><path d="M1 11H8L17 3V31L8 23H1Z" /><path {...ln} d="M21 11C24 14 24 20 21 23M26 7C31 13 31 21 26 27" /></Svg></Tray>
          <Tray $ml={26}><TrayPct>28%</TrayPct></Tray>
          <Tray $ml={9}><Svg w={46} h={34}><path d="M10 3H2V31H10M30 3H40V31H30" {...ln} /><path d="M43 13V21" stroke="currentColor" strokeWidth="3" /><path d="M24 2L12 19H19L15 32L28 14H21Z" /></Svg></Tray>
          <Tray $ml={30}><svg width="33" height="32" viewBox="0 0 33 32"><rect width="33" height="32" fill="#fff" />{[0, 1, 2, 3, 4, 5, 6].map(i => <rect key={i} y={i * 4.8} width="33" height="2.4" fill="#c8273a" />)}<rect width="15" height="17" fill="#2c3f7e" /></svg></Tray>
          <Tray $ml={38}><TrayClock>Thu 2:30 PM</TrayClock></Tray>
          <Tray $ml={44}><Svg w={34} h={36}><circle cx="14" cy="13" r="10" {...ln} strokeWidth={2.6} /><path d="M21 21L32 34" stroke="currentColor" strokeWidth="3" /></Svg></Tray>
          <Tray $ml={33}><svg width="30" height="36" viewBox="0 0 30 36"><defs><radialGradient id="si" cx=".55" cy=".5" r=".6"><stop offset="0" stopColor="#eaf6ff" /><stop offset=".3" stopColor="#3ec8e8" /><stop offset=".65" stopColor="#7a4fd0" /><stop offset="1" stopColor="#1a2a55" /></radialGradient></defs><ellipse cx="15" cy="18" rx="15" ry="18" fill="url(#si)" /></svg></Tray>
          <Tray $ml={27}><Svg w={36} h={30}><path d="M0 2H3V7H0Z M8 2H36V7H8Z M0 13H3V18H0Z M8 13H30V18H8Z M0 24H3V29H0Z M8 24H36V29H8Z" /></Svg></Tray>
        </MenuRight>
      </MenuBar>

      <Desk>
        <LeftRail />
        <Win>
          <TitleBar>
            <Light $c="#f6565a" $ml={0} />
            <Light $c="#fbb93a" $ml={19} />
            <Light $c="#2fc748" $ml={18} />
            <AiMark>Ai</AiMark>
            <AppBadge $ml={45}>Br</AppBadge>
            <AppBadge $on $ml={40}>St</AppBadge>
            <Spaced $ml={32}><Svg w={34} h={22} vb="0 0 34 22"><path d="M0 0H14V22H0Z M18 0H34V9H18Z M18 12H34V22H18Z" fill="#c4c4c4" /></Svg></Spaced>
            <Spaced $ml={15}><Chevron s={14} c="#cfcfcf" /></Spaced>
            <Spaced $ml={36}><Svg w={34} h={36}><path d="M32 0C22 4 12 12 10 20L14 24C22 20 30 10 32 0Z M8 12L1 20H8ZM16 26L13 36L20 24Z" fill="#c4c4c4" /></Svg></Spaced>
            <VSep $ml={1302} />
            <Workspace>Essentials Classic</Workspace>
            <Spaced $ml={21}><Chevron s={16} c="#cfcfcf" /></Spaced>
            <VSep $ml={29} />
            <StockField><Svg w={36} h={30}><circle cx="13" cy="10" r="8" fill="none" stroke="#bdbdbd" strokeWidth="2" /><path d="M8 17L2 28" stroke="#bdbdbd" strokeWidth="2.4" /><path d="M20 20H32L26 27Z" fill="#bdbdbd" /></Svg><span>Search Adobe Stock</span></StockField>
          </TitleBar>

          <ControlBar>
            <GripV />
            <CtlText $ml={15} $w={120}>No Selection</CtlText>
            <VSep $ml={58} $h={44} />
            <Seg $ml={12} $w={74}><Swatch $w={38} $c="#000" $bd="#fff" /><DD><Chevron /></DD></Seg>
            <Seg $ml={13} $w={76}>
              <Swatch $w={38} $c="#fff" $bd="#fff"><svg width="34" height="36" viewBox="0 0 34 36"><rect x="12" y="13" width="10" height="10" fill="none" stroke="#222" strokeWidth="2.4" /><path d="M3 36L31 0" stroke="#ec2027" strokeWidth="3" /></svg></Swatch>
              <DD><Chevron /></DD>
            </Seg>
            <CtlText $ml={25} $w={67} $dotted>Stroke:</CtlText>
            <Seg $ml={11} $w={174}>
              <Stepper><Chevron d="u" /><Chevron /></Stepper>
              <FieldCell $w={102} />
              <DD><Chevron /></DD>
            </Seg>
            <Seg $ml={12} $w={218}><Swatch $w={179} $c="#7c7c7c" /><DD $dim><Chevron /></DD></Seg>
            <Seg $ml={11} $w={210}><Swatch $w={172} $c="#e8e8e8"><BrushDot /><BrushText>5 pt. Round</BrushText></Swatch><DD><Chevron /></DD></Seg>
            <CtlText $ml={16} $w={78} $dotted>Opacity:</CtlText>
            <Seg $ml={12} $w={153}><FieldCell $w={116}>100%</FieldCell><DD><Chevron d="r" /></DD></Seg>
            <CtlText $ml={11} $w={52}>Style:</CtlText>
            <Seg $ml={11} $w={77}><Swatch $w={40} $c="#e8e8e8" /><DD><Chevron /></DD></Seg>
            <VSep $ml={12} $h={46} />
            <CtlButton $ml={12} $w={198}>Document Setup</CtlButton>
            <CtlButton $ml={11} $w={151}>Preferences</CtlButton>
            <VSep $ml={11} $h={46} />
            <Spaced $ml={22}><Svg w={34} h={30}><path d="M0 0H8L12 5V25L8 30H0V22L3 17V13L0 8Z M34 0H26L22 5V25L26 30H34V22L31 17V13L34 8Z" fill="none" stroke="#c4c4c4" strokeWidth="2.4" /><rect x="9" y="6" width="16" height="18" fill="none" stroke="#c4c4c4" strokeWidth="2.4" /></Svg></Spaced>
            <Spaced $ml={25}><Svg w={30} h={34}><path d="M18 1H28V14H18Z M1 12H12V24H1Z" fill="none" stroke="#c4c4c4" strokeWidth="2.2" /><path d="M12 10L26 24L18 24L14 34Z" fill="#c4c4c4" /></Svg></Spaced>
            <Spaced $ml={20}><Chevron c="#cfcfcf" /></Spaced>
            <Spaced $ml={246}><Svg w={26} h={30}><path d="M0 2H10V12H0Z M15 2H25V12H15Z M0 18H10V28H0Z M15 18H25V28H15Z M12 0H13V30H12Z" fill="#6e6e6e" /></Svg></Spaced>
            <Spaced $ml={27}><Svg w={30} h={34}><path d="M0 0H7V10H0Z M0 14H7V21H0Z M0 25H7V34H0Z M9 10H18C26 10 26 24 18 24H9" fill="none" stroke="#c4c4c4" strokeWidth="3.2" /></Svg></Spaced>
            <Spaced $ml={7}><Chevron c="#787878" /></Spaced>
            <Spaced $ml={44}><Svg w={26} h={26}><path d="M0 1H4V5H0Z M7 1H26V5H7Z M0 11H4V15H0Z M7 11H22V15H7Z M0 21H4V25H0Z M7 21H26V25H7Z" fill="#c4c4c4" /></Svg></Spaced>
          </ControlBar>

          <MainRow>
            <ToolCol>
              <CollapseHead><Dbl /></CollapseHead>
              <GripH $top={8} />
              <ToolGroup $pt={15} $pb={2} $row={48}>
                <Tool $on><SelTool /></Tool><Tool $corner><DirTool /></Tool>
                <Tool><Wand /></Tool><Tool><LassoT /></Tool>
              </ToolGroup>
              <ToolGroup $pt={8} $pb={4} $row={47}>
                <Tool $corner><Pen /></Tool><Tool $corner><Curv /></Tool>
                <Tool $corner><TypeT /></Tool><Tool $corner><Arc /></Tool>
                <Tool $corner><Rect /></Tool><Tool $corner><Brush /></Tool>
                <Tool $corner><Shaper /></Tool><Tool $corner><Eraser /></Tool>
              </ToolGroup>
              <ToolGroup $pt={7} $pb={7} $row={46}>
                <Tool $corner><Rotate /></Tool><Tool $corner><Scale /></Tool>
                <Tool $corner><Warp /></Tool><Tool $corner><PinT /></Tool>
                <Tool $corner><Builder /></Tool><Tool $corner><Persp /></Tool>
              </ToolGroup>
              <ToolGroup $pt={6} $pb={3} $row={48}>
                <Tool><Mesh /></Tool><Tool><Grad /></Tool>
                <Tool $corner><Dropper /></Tool><Tool><Blend /></Tool>
              </ToolGroup>
              <ToolGroup $pt={5} $pb={5} $row={46}>
                <Tool $corner><Sprayer /></Tool><Tool $corner><Graph /></Tool>
              </ToolGroup>
              <ToolGroup $pt={2} $pb={5} $row={48}>
                <Tool><Artboard /></Tool><Tool $corner><Knife /></Tool>
                <Tool $corner><FaHandPaper size={30} /></Tool><Tool><Zoom /></Tool>
              </ToolGroup>
              <ColorArea>
                <BigStroke>
                  <svg width="68" height="68" viewBox="0 0 68 68"><rect x="20" y="18" width="28" height="32" fill="#555" stroke="#333" strokeWidth="2" /><path d="M0 68L68 0" stroke="#ee1c25" strokeWidth="4" /></svg>
                </BigStroke>
                <BigFill />
                <HoverIcon $l={99} $t={12}><Svg w={24} h={24}><path d="M1 5L9 1V3H16C21 3 23 9 20 15L23 15L17 22L13 15L16 15C18 11 17 8 14 8H9V10Z" /></Svg></HoverIcon>
                <HoverIcon $l={12} $t={92}><Svg w={24} h={22}><rect x="9" y="8" width="14" height="12" fill="#222" stroke="#cfcfcf" /><rect x="1" y="1" width="14" height="12" fill="#fff" stroke="#111" strokeWidth="2" /></Svg></HoverIcon>
              </ColorArea>
              <ModeRow $mt={7} $h={40}>
                <ModeCell $on><Svg w={28} h={22}><rect width="26" height="20" x="1" y="1" fill="#000" /></Svg></ModeCell>
                <ModeCell><svg width="28" height="22" viewBox="0 0 28 22"><defs><linearGradient id="mg" x1="0" x2="1"><stop offset="0" stopColor="#fff" /><stop offset="1" stopColor="#000" /></linearGradient></defs><rect x="1" y="1" width="26" height="20" fill="url(#mg)" stroke="#000" strokeWidth="2" /></svg></ModeCell>
                <ModeCell><svg width="28" height="22" viewBox="0 0 28 22"><rect x="1" y="1" width="26" height="20" fill="#fff" stroke="#000" strokeWidth="2" /><path d="M2 20L26 2" stroke="#ee1c25" strokeWidth="3" /></svg></ModeCell>
              </ModeRow>
              <ModeRow $mt={9} $h={37}>
                <ModeCell $on><Svg w={30} h={22}><path d="M12 2C5 2 1 5 1 9C1 13 5 15 10 15V21H28V9H21C20 5 17 2 12 2Z" fill="#bdbdbd" /><ellipse cx="12" cy="8.5" rx="8" ry="4.5" fill="#333" /></Svg></ModeCell>
                <ModeCell><Svg w={30} h={22}><path d="M12 2C5 2 1 5 1 9C1 13 5 15 10 15V21H28V9H21C20 5 17 2 12 2Z" fill="#a8a8a8" /><ellipse cx="12" cy="8.5" rx="8" ry="4.5" fill="#535353" /></Svg></ModeCell>
                <ModeCell $dim><Svg w={24} h={20}><circle cx="12" cy="10" r="9" fill="none" stroke="currentColor" strokeWidth="2" /><path d="M12 10H21V19H12Z" /></Svg></ModeCell>
              </ModeRow>
              <ScreenBtn><Svg w={44} h={32}><path d="M1 8H28V31H1Z" fill="#6a6a6a" stroke="currentColor" strokeWidth="2" /><path d="M17 1H43V21H17Z" fill="#6a6a6a" stroke="currentColor" strokeWidth="2" /></Svg></ScreenBtn>
            </ToolCol>
            <Gutter />

            <Center>
              <TabRow>
                <DocTab $w={620} $on><TabX>×</TabX><span>amino acid pathways.ai @ 100% (CMYK/GPU Preview)</span></DocTab>
                <DocTab $w={687}><TabX>×</TabX><span>amino_acid_pathways_color.svg @ 300% (RGB/GPU Preview)</span></DocTab>
              </TabRow>
              <DocWrap>
                <DocCol>
                  <Crumbs>
                    <Spaced $ml={12}><Svg w={24} h={30}><path d="M14 1L2 15L14 29V21H23V9H14Z" fill="none" stroke="#cfcfcf" strokeWidth="2.4" /></Svg></Spaced>
                    <Spaced $ml={27}><Svg w={28} h={30}><path d="M14 0L27 9L14 18L1 9Z" fill="#d0d0d0" /><path d="M1 15L14 24L27 15L27 20L14 30L1 20Z" fill="#d0d0d0" /></Svg></Spaced>
                    <Crumb $ml={10} $ls={-0.6}>Layer 1</Crumb>
                    <Spaced $ml={18}><Svg w={28} h={30}><path d="M1 1H27V29H1Z" fill="none" stroke="#d0d0d0" strokeWidth="2.4" /><path d="M5 5H13V15H5Z M15 12H23V24H15Z" fill="#d0d0d0" /></Svg></Spaced>
                    <Crumb $ml={10} $ls={-0.1}>TCA cycle</Crumb>
                    <Spaced $ml={17}><Svg w={28} h={30}><path d="M1 1H27V29H1Z" fill="none" stroke="#d0d0d0" strokeWidth="2.4" /><path d="M5 5H13V15H5Z M15 12H23V24H15Z" fill="#d0d0d0" /></Svg></Spaced>
                    <Crumb $ml={6} $on $ls={0.1}>enzyme-4.2.1.3</Crumb>
                  </Crumbs>
                  <BlueLine />
                  <CanvasBox><Diagram /></CanvasBox>
                  <Status>
                    <StField $ml={9} $w={137}><StText $w={98}>100%</StText><StDD><Chevron /></StDD></StField>
                    <StIcon $ml={21}><Svg w={14} h={24}><path d="M0 0H3V24H0Z M14 0L5 12L14 24Z" fill="#6f6f6f" /></Svg></StIcon>
                    <StIcon $ml={18}><Svg w={10} h={24}><path d="M10 0L0 12L10 24Z" fill="#6f6f6f" /></Svg></StIcon>
                    <StField $ml={16} $w={118}><StText $w={80}>1</StText><StDD><Chevron /></StDD></StField>
                    <StIcon $ml={19}><Svg w={10} h={24}><path d="M0 0L10 12L0 24Z" fill="#6f6f6f" /></Svg></StIcon>
                    <StIcon $ml={18}><Svg w={14} h={24}><path d="M11 0H14V24H11Z M0 0L9 12L0 24Z" fill="#6f6f6f" /></Svg></StIcon>
                    <StSel>Selection</StSel>
                    <StIcon $ml={4}><Svg w={12} h={24}><path d="M0 0L12 12L0 24Z" fill="#cfcfcf" /></Svg></StIcon>
                    <StIcon $ml={22}><Chevron d="l" s={16} c="#8a8a8a" /></StIcon>
                    <Knob />
                    <StIcon $ml={0} $end><Chevron d="r" s={16} c="#8a8a8a" /></StIcon>
                  </Status>
                </DocCol>
                <VScroll>
                  <VTrack>
                    <Chevron d="u" s={18} sw={1.4} />
                    <Chevron s={18} sw={1.4} />
                  </VTrack>
                  <VCorner />
                </VScroll>
              </DocWrap>
            </Center>

            <Dock>
              <DockCol $w={74}>
                <DockHead><Dbl /></DockHead>
                <DockGroup $pb={4}>
                  <DockGrip />
                  <DockBtn><Svg w={40} h={30}><ellipse cx="20" cy="15" rx="19" ry="13" /><circle cx="11" cy="16" r="3" fill="#535353" /><circle cx="20" cy="21" r="3" fill="#535353" /><circle cx="29" cy="20" r="3" fill="#535353" /><circle cx="33" cy="13" r="3" fill="#535353" /><circle cx="25" cy="9" r="3" fill="#535353" /></Svg></DockBtn>
                  <DockBtn><svg width="34" height="34" viewBox="0 0 34 34"><defs><linearGradient id="fa" x1="0" y1="1" x2="1" y2="0"><stop offset="0" stopColor="#666" /><stop offset="1" stopColor="#d0d0d0" /></linearGradient></defs><path d="M1 33V1C18 2 30 14 33 33Z" fill="url(#fa)" stroke="#c8c8c8" strokeWidth="1.5" /></svg></DockBtn>
                </DockGroup>
                <DockGroup $pb={5}>
                  <DockGrip />
                  <DockBtn><Svg w={32} h={24}><path d="M0 0H32V24H0Z" /><path d="M2 2H12V11H2Z M14 2H30V11H14Z M2 13H12V22H2Z M14 13H20V22H14Z M22 13H30V22H22Z" fill="#6a6a6a" /></Svg></DockBtn>
                  <DockBtn><Svg w={34} h={34}><path d="M9 18H25V34H9Z M8 2L12 6 L14 17 H11 L3 8Z M16 0H20V17H16Z M23 17 C24 10 28 7 34 8 C31 11 28 15 26 17Z" /></Svg></DockBtn>
                  <DockBtn><BsSuitClubFill size={32} /></DockBtn>
                </DockGroup>
                <DockGroup $pb={5}>
                  <DockGrip />
                  <DockBtn><Svg w={34} h={26}><path d="M0 2H34V3H0Z M0 11H34V15H0Z M0 20H34V25H0Z" /></Svg></DockBtn>
                  <DockBtn><svg width="34" height="26" viewBox="0 0 34 26"><defs><linearGradient id="gb" x1="0" x2="1"><stop offset="0" stopColor="#c8c8c8" /><stop offset="1" stopColor="#444" /></linearGradient></defs><rect x="1" y="1" width="32" height="24" fill="url(#gb)" stroke="#c8c8c8" strokeWidth="2" /></svg></DockBtn>
                  <DockBtn><Svg w={36} h={36}><ellipse cx="14" cy="13" rx="13" ry="12" /><ellipse cx="23" cy="23" rx="12" ry="11" fill="#666" stroke="currentColor" strokeWidth="2" /></Svg></DockBtn>
                </DockGroup>
                <DockGroup $pb={4}>
                  <DockGrip />
                  <DockBtn><Svg w={36} h={34}><ellipse cx="18" cy="17" rx="13" ry="12" /><ellipse cx="18" cy="17" rx="16.5" ry="15" fill="none" stroke="currentColor" strokeWidth="2" strokeDasharray="4 3.5" /></Svg></DockBtn>
                  <DockBtn $h={58}><Svg w={34} h={30}><path d="M8 1H33V20H8Z" fill="none" stroke="currentColor" strokeWidth="2" /><path d="M1 12H12V21H1Z M6 21H18V28H6Z" fill="#535353" stroke="currentColor" strokeWidth="2" /></Svg></DockBtn>
                </DockGroup>
                <DockGroup $pb={6}>
                  <DockGrip />
                  <DockBtn $on><Svg w={32} h={34}><path d="M16 2L31 12L16 21L1 12Z" /><path d="M1 19L16 29L31 19L31 22L16 32L1 22Z" /></Svg></DockBtn>
                  <DockBtn><Svg w={36} h={34}><path d="M20 6H2V32H30V20" fill="none" stroke="currentColor" strokeWidth="3.4" /><path d="M22 1H36V14L31 10L22 18L18 14L26 6Z" /></Svg></DockBtn>
                  <DockBtn><Svg w={36} h={36}><path d="M1 1H21V13H9V24H1Z" fill="none" stroke="currentColor" strokeWidth="2" /><path d="M9 13H35V33H9Z" fill="none" stroke="currentColor" strokeWidth="2" /></Svg></DockBtn>
                </DockGroup>
              </DockCol>
              <DockGap />
              <DockCol $w={71}>
                <DockHead><Dbl /></DockHead>
                <DockGroup $pb={4}>
                  <DockGrip />
                  <DockBtn><Svg w={36} h={36}><path d="M14 1L1 6V16L14 21L27 16V6Z" fill="none" stroke="currentColor" strokeWidth="2" /><path d="M1 6L14 11L27 6M14 11V21" fill="none" stroke="currentColor" strokeWidth="2" /><path d="M27 2H36V8H27Z M27 12H36V18H27Z M0 26H36V34H0Z" /></Svg></DockBtn>
                  <DockBtn><Svg w={44} h={32}><ellipse cx="22" cy="16" rx="21" ry="15" fill="#2f2f2f" /><ellipse cx="22" cy="16" rx="18" ry="12" /><path d="M6 17C6 12 11 9 16 10C20 11 22 15 25 18C28 21 33 20 34 17C35 14 32 11 28 12C25 13 24 15 22 17C19 20 15 22 11 21C8 20 6 19 6 17Z" fill="none" stroke="#4a4a4a" strokeWidth="2.5" /></Svg></DockBtn>
                </DockGroup>
              </DockCol>
            </Dock>
          </MainRow>
        </Win>
        <RightRail>
          <RailTop $h={74} $c="#f6f6f6" $round />
          <RailTop $h={47} $c="#ececec" />
          <RailTrack $h={429} $pt={159}><RailThumb $h={270} /></RailTrack>
          <RailTop $h={109} $c="#ebebeb" $round />
          <RailTop $h={47} $c="#efefef" />
          <RailTrack $h={715} $pt={6}><RailThumb $h={432} /></RailTrack>
          <RailTrack $h={135} $pt={0}><RailThumb $h={72} /></RailTrack>
        </RightRail>
      </Desk>

      <LayersPanel>
        <PTabs>
          <PTab $w={103} $on>Layers</PTab>
          <PTab $w={124}>Asset Export</PTab>
          <PTab $w={126}>Artboards</PTab>
          <PTabTools>
            <Svg w={20} h={16}><path d="M2 1L9 8L2 15M11 1L18 8L11 15" fill="none" stroke="currentColor" strokeWidth="1.6" /></Svg>
            <PTabDiv />
            <Svg w={21} h={15}><path d="M0 0H21V2H0Z M0 4.3H21V6.3H0Z M0 8.6H21V10.6H0Z M0 13H21V15H0Z" /></Svg>
          </PTabTools>
        </PTabs>
        <PFrame>
          {rows.map((r, i) => (
            <LRow key={i} $sel={r.sel}>
              <LCell $eye>{r.eye && <Eye />}</LCell>
              <LCell />
              <LCell $bar={r.eye} />
              <LMain $level={r.level}>
                {r.chev && <LChevron $in={r.chev === "r"}><Chevron d={r.chev} s={18} c="#e0e0e0" sw={1.6} /></LChevron>}
                <Thumb>{r.thumb}</Thumb>
                <span>{r.name}</span>
              </LMain>
              <LCell $line={false}>{r.ring && <TargetRing $full={r.full} />}</LCell>
            </LRow>
          ))}
          <CornerFlag />
        </PFrame>
        <PFoot>
          <Svg w={26} h={26}><path d="M15 4H2V24H22V14" fill="none" stroke="currentColor" strokeWidth="2.2" /><path d="M14 1H24V11L20 7L13 14L11 12L18 5Z" /></Svg>
          <Svg w={26} h={26}><circle cx="15" cy="10" r="8" fill="none" stroke="currentColor" strokeWidth="2.2" /><path d="M9 16L2 24" stroke="currentColor" strokeWidth="3.4" /></Svg>
          <PFootOn><Svg w={24} h={24}><path d="M1 1H15V15H1Z M8 8H23V23H8Z" fill="none" stroke="currentColor" strokeWidth="2" /><path d="M8 8H15V15H8Z" /></Svg></PFootOn>
          <Svg w={30} h={24}><path d="M12 3H28V22H14L8 14H16V10H8Z M0 7H6V4L11 10L6 16V12H2Z" /></Svg>
          <Svg w={24} h={24}><path d="M8 2H22V22H10V14H2Z" /></Svg>
          <PFootOn><Svg w={22} h={26}><path d="M7 2H15V5H21V8H1V5H7Z" /><path d="M3 9V25H19V9M8 11V22M11 11V22M14 11V22" fill="none" stroke="currentColor" strokeWidth="2" /></Svg></PFootOn>
        </PFoot>
        <PStrip><DockGrip /></PStrip>
      </LayersPanel>

      <Dialog>
        <DlgTitle>Options</DlgTitle>
        <DlgBody>
          <NameRow>
            <NameLabel>Name:</NameLabel>
            <NameField><SelText>box-4.2.1.3</SelText></NameField>
          </NameRow>
          <ChkRow>
            <Chk $on $ml={0}><Svg w={16} h={16}><path d="M2 8L6 14L14 2" fill="none" stroke="currentColor" strokeWidth="2.4" /></Svg></Chk>
            <ChkText $ml={9} $ls={-0.3}>Show</ChkText>
            <Chk $ml={22} />
            <ChkText $ml={10} $ls={-0.9}>Lock</ChkText>
          </ChkRow>
          <BtnRow>
            <DlgBtn>Cancel</DlgBtn>
            <DlgBtn $def>OK</DlgBtn>
          </BtnRow>
        </DlgBody>
      </Dialog>
    </Root>
  );
}
